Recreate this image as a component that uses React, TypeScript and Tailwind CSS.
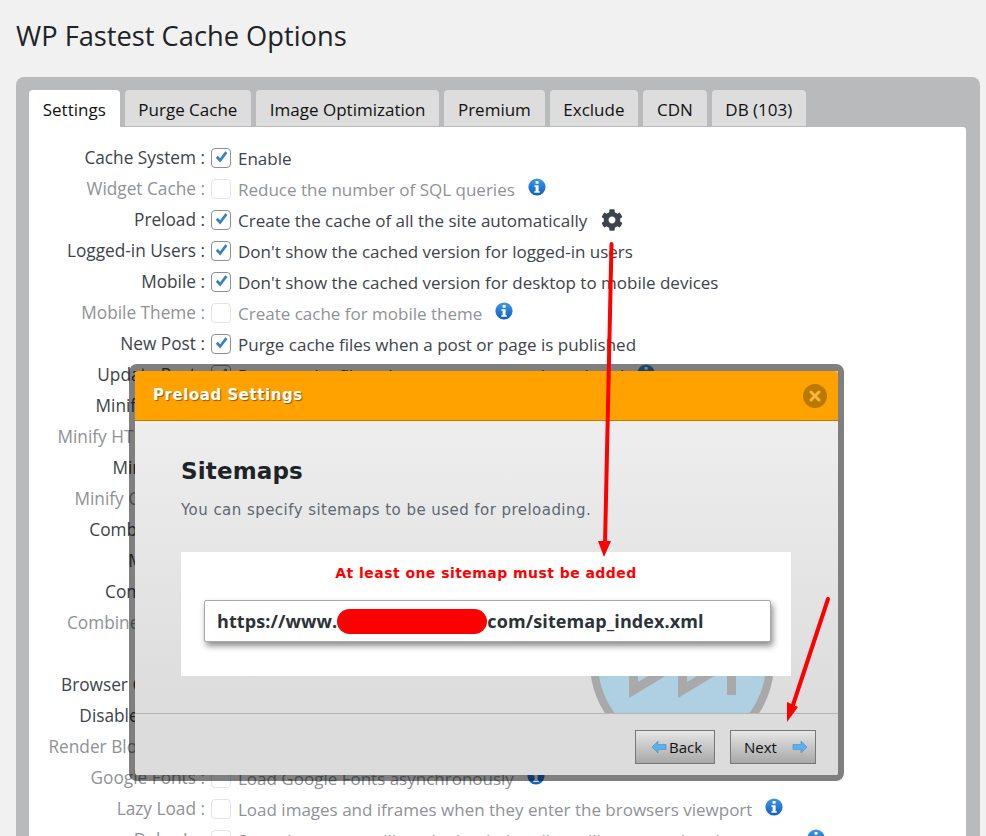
import { FaCog } from 'react-icons/fa';

const sans = "font-['Open_Sans','Noto_Sans',sans-serif]";

interface RowData {
  label: string;
  text?: string;
  checked?: boolean;
  disabled?: boolean;
  info?: boolean;
  gear?: boolean;
}

const rows: RowData[] = [
  { label: 'Cache System', text: 'Enable', checked: true },
  { label: 'Widget Cache', text: 'Reduce the number of SQL queries', disabled: true, info: true },
  { label: 'Preload', text: 'Create the cache of all the site automatically', checked: true, gear: true },
  { label: 'Logged-in Users', text: "Don't show the cached version for logged-in users", checked: true },
  { label: 'Mobile', text: "Don't show the cached version for desktop to mobile devices", checked: true },
  { label: 'Mobile Theme', text: 'Create cache for mobile theme', disabled: true, info: true },
  { label: 'New Post', text: 'Purge cache files when a post or page is published', checked: true },
  { label: 'Update Post', text: 'Purge cache files when a post or page is updated', checked: true, info: true },
  { label: 'Minify HTML', text: 'You can decrease the size of page', checked: true },
  { label: 'Minify HTML Plus', text: 'More powerful minify HTML', disabled: true },
  { label: 'Minify CSS', text: 'You can decrease the size of css files', checked: true },
  { label: 'Minify CSS Plus', text: 'More powerful minify CSS', disabled: true },
  { label: 'Combine CSS', text: 'Reduce HTTP requests through combined css files', checked: true },
  { label: 'Minify JS', text: 'You can decrease the size of js files', checked: true },
  { label: 'Combine JS', text: 'Reduce HTTP requests through combined js files', checked: true },
  { label: 'Combine JS Plus', text: 'Minify combined js files', disabled: true },
  { label: 'Gzip', text: 'Reduce the size of files sent from your server', checked: true },
  { label: 'Browser Caching', text: 'Reduce page load times for repeat visitors', checked: true },
  { label: 'Disable Emojis', text: 'You can remove the emoji inline css', checked: true },
  { label: 'Render Blocking Js', text: 'Eliminate render-blocking js resources', disabled: true },
  { label: 'Google Fonts', text: 'Load Google Fonts asynchronously', disabled: true, info: true },
  { label: 'Lazy Load', text: 'Load images and iframes when they enter the browsers viewport', disabled: true, info: true },
  { label: 'Delay Js', text: 'Some js sources will not be loaded until scrolling or moving the mouse', disabled: true, info: true },
];

const tabs = ['Settings', 'Purge Cache', 'Image Optimization', 'Premium', 'Exclude', 'CDN', 'DB (103)'];

function InfoIcon() {
  return (
    <svg width="18" height="19" viewBox="0 0 18 19" className="shrink-0">
      <defs>
        <linearGradient id="infoFill" x1="0" y1="0" x2="0" y2="1">
          <stop offset="0" stopColor="#3f97e6" />
          <stop offset="1" stopColor="#0d5fc4" />
        </linearGradient>
      </defs>
      <circle cx="9" cy="9" r="8.6" fill="url(#infoFill)" />
      <rect x="7.6" y="3" width="3" height="2.8" rx="0.6" fill="#fff" />
      <path d="M6.4 7.2h4.2v6h1.2v1.6H6.3v-1.6h1.3V8.8H6.4z" fill="#fff" />
    </svg>
  );
}

function Check({ on, dim }: { on?: boolean; dim?: boolean }) {
  return (
    <span
      className={`flex h-5 w-5 shrink-0 items-center justify-center rounded-[4px] border bg-white ${
        dim ? 'border-[#dfe5ea]' : 'border-[#8c8f94]'
      }`}
    >
      {on && (
        <svg width="17" height="17" viewBox="0 0 16 16">
          <path d="M2.6 8.2l1.9-1.9 2.2 2.3L11.6 2.2l2 1.6-6.8 9z" fill="#3582c4" />
        </svg>
      )}
    </span>
  );
}

function Row({ row }: { row: RowData }) {
  return (
    <div className={`flex h-[31px] items-center ${row.disabled ? 'text-[#8f9296]' : 'text-[#3c434a]'}`}>
      <span className="w-[176px] whitespace-nowrap text-right text-[17.25px]">{row.label} :</span>
      <span className="ml-[6px]">
        <Check on={row.checked} dim={row.disabled} />
      </span>
      <span className="ml-[7px] mt-[3px] whitespace-nowrap">{row.text}</span>
      {row.info && (
        <span className="ml-[13px] -mt-[3px]">
          <InfoIcon />
        </span>
      )}
      {row.gear && <FaCog className="ml-[14px] h-[22px] w-[22px] text-[#3c434a]" />}
    </div>
  );
}

function BackArrow({ flip }: { flip?: boolean }) {
  return (
    <svg width="16" height="14" viewBox="0 0 16 14" className={flip ? 'rotate-180' : ''}>
      <path d="M7 1L1 7l6 6V9.5h8v-5H7z" fill="#5cb0ea" stroke="#3f8fcb" strokeWidth="0.6" />
    </svg>
  );
}

export default function App() {
  return (
    <div className={`relative h-[836px] w-[986px] overflow-hidden bg-[#f1f1f1] ${sans}`}>
      <h1 className="pl-4 pt-[15px] text-[27.25px] leading-[42px] text-[#1d2327]">WP Fastest Cache Options</h1>

      <div className="ml-4 mr-1.5 mt-[20px] rounded-t-lg bg-[#b9babc] pl-[13px] pr-[14px] pt-[13px]">
        <div className="flex gap-[5px]">
          {tabs.map((tab, i) => (
            <div
              key={tab}
              className={`flex h-[36px] items-center rounded-t-[4px] px-[13.75px] pt-[3px] text-[17px] text-[#111] ${
                i === 0 ? 'relative z-10 h-[37px] bg-white' : 'bg-[#dddddd]'
              }`}
            >
              {tab}
            </div>
          ))}
        </div>
        <div className="h-[720px] rounded-tr-[3px] bg-white pt-[15px] text-[17px]">
          {rows.map((row) => (
            <Row key={row.label} row={row} />
          ))}
        </div>
      </div>

      {/* preload modal */}
      <div className="absolute left-[129px] top-[364px] h-[417px] w-[715px] rounded-lg border-x-[6px] border-b-[6px] border-t-[7px] border-black/50 bg-clip-padding font-['DejaVu_Sans',sans-serif]">
        <div className="flex h-full flex-col overflow-hidden rounded-[3px]">
          <div className="flex h-[50px] shrink-0 items-center justify-between border-b border-[#c27c00] bg-[#ffa200] pl-[18px] pr-[11px]">
            <span className="text-[15px] font-bold tracking-[0.55px] text-white [text-shadow:1px_1px_1px_rgba(0,0,0,0.45)]">Preload Settings</span>
            <span className="flex h-6 w-6 items-center justify-center rounded-full bg-[#b87a00]">
              <svg width="12" height="12" viewBox="0 0 12 12">
                <path d="M2 2l8 8M10 2l-8 8" stroke="#ffb53c" strokeWidth="3" strokeLinecap="round" />
              </svg>
            </span>
          </div>

          <div className="relative h-[293px] shrink-0 overflow-hidden border-b border-[#b4b4b4] bg-gradient-to-b from-[#eeeeee] to-[#dcdcdc] px-[46px] pt-[36px]">
            {/* faint logo behind the box, mostly covered */}
            <svg width="200" height="200" viewBox="0 0 200 200" className="absolute left-[447px] top-[142px]">
              <circle cx="100" cy="100" r="88" fill="#afcfe2" stroke="#a9a9a9" strokeWidth="8" />
              <path d="M47 65v70l58-35zM96 65v70l58-35z" fill="#a9a9a9" />
              <path d="M56 81v38l32-19zM105 81v38l32-19z" fill="#afcfe2" />
              <rect x="145" y="68" width="9" height="64" fill="#a9a9a9" />
            </svg>
            <h2 className="relative text-[23px] font-bold leading-[28px] tracking-[0.15px] text-[#1d2327]">Sitemaps</h2>
            <p className="relative mt-[15px] text-[15px] leading-[20px] tracking-[0.45px] text-[#5f6770]">You can specify sitemaps to be used for preloading.</p>
            <div className="relative mt-[32px] h-[124px] w-[610px] bg-white pt-[12px]">
              <p className="text-center text-[14px] font-bold leading-[18px] tracking-[0.45px] text-[#f00]">At least one sitemap must be added</p>
              <div className={`mx-[23px] mt-[18px] flex h-[42px] w-[567px] items-center rounded-[2px] border border-[#a8a8a8] bg-white pl-3 text-[18px] font-bold tracking-[0.1px] text-[#2c3338] shadow-[2px_4px_6px_rgba(0,0,0,0.45)] ${sans}`}>
                <span>https://www.</span>
                <span className="h-[25px] w-[150px] shrink-0 rounded-full bg-[#f00]" />
                <span>com/sitemap_index.xml</span>
              </div>
            </div>
          </div>

          <div className={`flex flex-1 items-start justify-end gap-[15px] bg-[#dcdcdc] pr-[22px] pt-[16px] text-[15px] text-[#111] ${sans}`}>
            <div className="flex h-[34px] w-[80px] items-center border border-[#777] bg-gradient-to-b from-[#e6e6e6] to-[#a8a8a8] pl-[15px]">
              <BackArrow />
              <span className="ml-[2px] mt-[1px]">Back</span>
            </div>
            <div className="flex h-[34px] w-[86px] items-center border border-[#777] bg-gradient-to-b from-[#e6e6e6] to-[#a8a8a8] pl-[13px]">
              <span className="mt-[1px]">Next</span>
              <span className="ml-[15px] flex">
                <BackArrow flip />
              </span>
            </div>
          </div>
        </div>
      </div>

      {/* red annotation arrows */}
      <svg width="986" height="836" viewBox="0 0 986 836" className="pointer-events-none absolute left-0 top-0">
        <path d="M611.5 244L605 545" stroke="#f00" strokeWidth="4" strokeLinecap="round" fill="none" />
        <path d="M598 541L611 541L604 557z" fill="#f00" />
        <path d="M828 599L793 705" stroke="#f00" strokeWidth="4" strokeLinecap="round" fill="none" />
        <path d="M787 702L798 707L787 722z" fill="#f00" />
      </svg>
    </div>
  );
}
